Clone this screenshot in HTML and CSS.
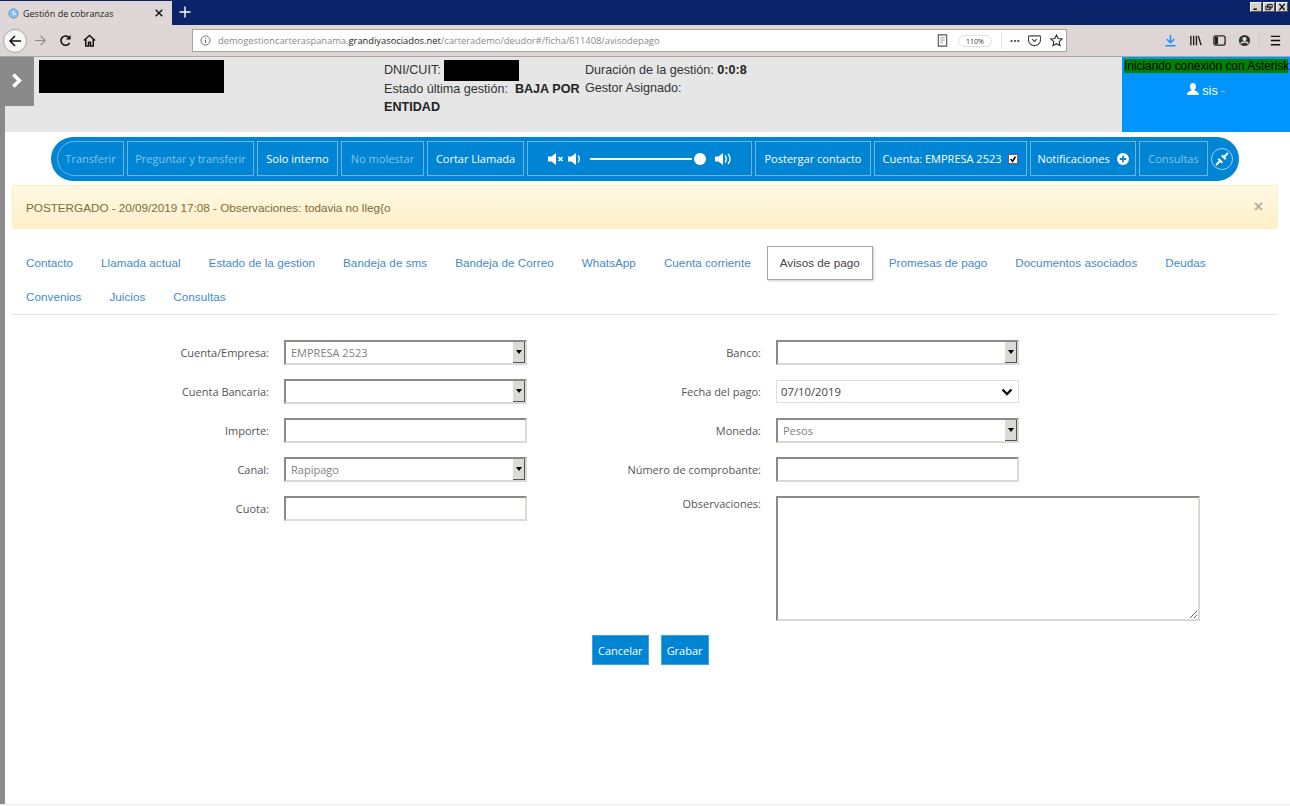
FILE: index.html
```html
<!DOCTYPE html>
<html lang="es">
<head>
    <meta charset="UTF-8">
    <title>Gestión de cobranzas</title>
    <link rel="stylesheet" href="styles.css">
</head>
<body>
    <!-- barra del navegador -->
    <div class="tab-strip">
        <div class="browser-tab">
            <svg class="favicon" viewBox="0 0 12 12"><circle cx="6" cy="6" r="5" fill="#8fc1ea" stroke="#4d8fd0"/><path d="M6 3v3.4h2.4" fill="none" stroke="#fff" stroke-width="1.2"/></svg>
            <span class="browser-tab-title">Gestión de cobranzas</span>
            <svg class="tab-close" viewBox="0 0 8 8"><path d="M.7.7l6.6 6.6M7.3.7L.7 7.3" stroke="#111" stroke-width="1.4"/></svg>
        </div>
        <svg class="new-tab" viewBox="0 0 12 12"><path d="M6 .5v11M.5 6h11" stroke="#fff" stroke-width="1.4"/></svg>
        <div class="window-buttons">
            <span class="window-button"><svg viewBox="0 0 10 9"><path d="M2 7h4" stroke="#000" stroke-width="1.6"/></svg></span>
            <span class="window-button"><svg viewBox="0 0 10 9"><path d="M3.5 1.5h5v4h-5zM1.5 3.5h5v4h-5z" fill="#ddd" stroke="#000"/></svg></span>
            <span class="window-button"><svg viewBox="0 0 10 9"><path d="M2 1l6 7M8 1L2 8" stroke="#000" stroke-width="1.5"/></svg></span>
        </div>
    </div>
    <div class="nav-bar">
        <span class="back-button"><svg viewBox="0 0 14 14"><path d="M13 7H2M7 2L2 7l5 5" fill="none" stroke="#111" stroke-width="1.5"/></svg></span>
        <svg class="nav-icon forward" viewBox="0 0 14 14"><path d="M1 7h11M7 2l5 5-5 5" fill="none" stroke="#8d8a88" stroke-width="1.2"/></svg>
        <svg class="nav-icon reload" viewBox="0 0 14 14"><path d="M11.5 9.5A5 5 0 1 1 11 4" fill="none" stroke="#111" stroke-width="1.7"/><path d="M12.5 1v5h-5z" fill="#111"/></svg>
        <svg class="nav-icon home" viewBox="0 0 14 14"><path d="M1 7l6-5.5L13 7M3 6v7h3V9h2v4h3V6" fill="none" stroke="#111" stroke-width="1.6"/></svg>
        <div class="url-bar">
            <svg class="url-info" viewBox="0 0 12 12"><circle cx="6" cy="6" r="5" fill="none" stroke="#666"/><path d="M6 5.2v3.6M6 3v1.2" stroke="#666" stroke-width="1.1"/></svg>
            <span class="url-text">demogestioncarteraspanama.<b>grandiyasociados.net</b>/carterademo/deudor#/ficha/611408/avisodepago</span>
            <svg class="url-icon reader" viewBox="0 0 12 14"><path d="M1.5 1h9v12h-9z" fill="none" stroke="#555" stroke-width="1.2"/><path d="M3.5 4h5M3.5 6.5h5M3.5 9h3" stroke="#999"/></svg>
            <span class="zoom-badge">110%</span>
            <span class="url-divider"></span>
            <span class="url-dots">•••</span>
            <svg class="url-icon" viewBox="0 0 14 14"><path d="M1.5 2h11a1 1 0 0 1 1 1v3a6.500 6.500 0 0 1-13 0V3a1 1 0 0 1 1-1z" fill="none" stroke="#444" stroke-width="1.2"/><path d="M4.500 5.500L7 8l2.500-2.500" fill="none" stroke="#444" stroke-width="1.3"/></svg>
            <svg class="url-icon star" viewBox="0 0 14 14"><path d="M7 1l1.800 3.900 4.200.5-3.100 2.900.8 4.200L7 10.400 3.300 12.500l.8-4.200L1 5.400l4.200-.5z" fill="none" stroke="#333" stroke-width="1.2"/></svg>
        </div>
        <div class="nav-right">
            <svg class="nav-icon" viewBox="0 0 14 14"><path d="M7 1v8M3 5.500L7 9.500l4-4M1.500 12.700h11" fill="none" stroke="#1f8fff" stroke-width="1.6"/></svg>
            <svg class="nav-icon" viewBox="0 0 14 14"><path d="M2 2v10M5 2v10M8 2v10" stroke="#222" stroke-width="1.5"/><path d="M10 2l3 10" stroke="#222" stroke-width="1.5"/></svg>
            <svg class="nav-icon" viewBox="0 0 14 14"><rect x="1" y="2" width="12" height="10" rx="2" fill="none" stroke="#222" stroke-width="1.4"/><path d="M2 3h3.500v8H2z" fill="#222"/></svg>
            <svg class="nav-icon" viewBox="0 0 14 14"><circle cx="7" cy="7" r="6" fill="#333"/><circle cx="7" cy="5.500" r="2.300" fill="#ddd"/><path d="M3 10.500c1-2.500 7-2.500 8 0" fill="none" stroke="#ddd" stroke-width="1.500"/></svg>
            <span class="nav-divider"></span>
            <svg class="nav-icon" viewBox="0 0 14 14"><path d="M2 2.500h10M2 7h10M2 11.500h10" stroke="#111" stroke-width="1.5"/></svg>
        </div>
    </div>

    <div class="app">
        <div class="side-strip">
            <span class="side-toggle"><svg viewBox="0 0 10 12"><path d="M2 1l5 5-5 5" fill="none" stroke="#fff" stroke-width="3"/></svg></span>
        </div>
        <div class="content">
            <div class="page-header">
                <div class="logo-box"></div>
                <div class="info-col info-first">
                    <div>DNI/CUIT: <span class="redacted"></span></div>
                    <div>Estado última gestión: &nbsp;<b>BAJA POR</b></div>
                    <div><b>ENTIDAD</b></div>
                </div>
                <div class="info-col">
                    <div>Duración de la gestión: <b>0:0:8</b></div>
                    <div>Gestor Asignado:</div>
                </div>
                <div class="user-box">
                    <div class="asterisk-status">Iniciando conexión con Asterisk</div>
                    <div class="user-name">
                        <svg viewBox="0 0 12 12"><path d="M6 0c2 0 3 1.500 3 3.300S8 7 7.500 7.500c1.500.6 4.500 1.300 4.500 4.500H0c0-3.200 3-3.900 4.500-4.500C4 7 3 5.100 3 3.300S4 0 6 0z"/></svg>
                        sis <span class="user-caret"></span>
                    </div>
                </div>
            </div>

            <div class="call-bar">
                <span class="call-btn first off">Transferir</span>
                <span class="call-btn off">Preguntar y transferir</span>
                <span class="call-btn">Solo interno</span>
                <span class="call-btn off">No molestar</span>
                <span class="call-btn">Cortar Llamada</span>
                <div class="call-btn volume">
                    <svg class="vol-mute" viewBox="0 0 17 12"><path d="M0 3.500h3.500L8 0v12L3.500 8.500H0z"/><path d="M10.500 4l4 4M14.500 4l-4 4" stroke="#fff" stroke-width="1.500"/></svg>
                    <svg class="vol-low" viewBox="0 0 14 12"><path d="M0 3.500h3.500L8 0v12L3.500 8.500H0z"/><path d="M10 2.500c1.500 2 1.500 5 0 7" fill="none" stroke="#fff" stroke-width="1.300"/></svg>
                    <span class="vol-track"></span>
                    <span class="vol-thumb"></span>
                    <svg class="vol-high" viewBox="0 0 17 12"><path d="M0 3.500h3.500L8 0v12L3.500 8.500H0z"/><path d="M10 2.500c1.500 2 1.500 5 0 7M13 1c2.500 3 2.500 7 0 10" fill="none" stroke="#fff" stroke-width="1.300"/></svg>
                </div>
                <span class="call-btn">Postergar contacto</span>
                <span class="call-btn">Cuenta: EMPRESA 2523 <span class="check-box"><svg viewBox="0 0 10 10"><path d="M2 5l2.500 3L8 2" fill="none" stroke="#000" stroke-width="2"/></svg></span></span>
                <span class="call-btn">Notificaciones <svg class="plus-circle" viewBox="0 0 12 12"><circle cx="6" cy="6" r="6" fill="#fff"/><path d="M6 2.800v6.400M2.800 6h6.400" stroke="#0085d4" stroke-width="1.800"/></svg></span>
                <span class="call-btn off">Consultas</span>
                <span class="expand-btn"><svg viewBox="0 0 14 14"><path d="M9 5l4-4M5 9l-4 4" stroke="#fff" stroke-width="1.800"/><path d="M7.500 2.500l4 4-1.500 1.500-4-4zM2.500 7.500l4 4L8 10 4 6z" fill="#fff"/></svg></span>
            </div>

            <div class="alert-box">
                <span>POSTERGADO - 20/09/2019 17:08 - Observaciones: todavia no lleg{o</span>
                <span class="alert-close">×</span>
            </div>

            <ul class="tabs">
                <li>Contacto</li>
                <li>Llamada actual</li>
                <li>Estado de la gestion</li>
                <li>Bandeja de sms</li>
                <li>Bandeja de Correo</li>
                <li>WhatsApp</li>
                <li>Cuenta corriente</li>
                <li class="active">Avisos de pago</li>
                <li>Promesas de pago</li>
                <li>Documentos asociados</li>
                <li>Deudas</li>
                <li>Convenios</li>
                <li>Juicios</li>
                <li>Consultas</li>
            </ul>

            <form class="pay-form">
                <div class="form-col col-left">
                    <label>Cuenta/Empresa:</label>
                    <div class="select-box"><select class="field"><option>EMPRESA 2523</option></select><span class="select-arrow"></span></div>
                    <label>Cuenta Bancaria:</label>
                    <div class="select-box"><select class="field"><option></option></select><span class="select-arrow"></span></div>
                    <label>Importe:</label>
                    <input class="field" type="text">
                    <label>Canal:</label>
                    <div class="select-box"><select class="field"><option>Rapipago</option></select><span class="select-arrow"></span></div>
                    <label>Cuota:</label>
                    <input class="field" type="text">
                </div>
                <div class="form-col col-right">
                    <label>Banco:</label>
                    <div class="select-box"><select class="field"><option></option></select><span class="select-arrow"></span></div>
                    <label>Fecha del pago:</label>
                    <div class="date-field">07/10/2019<svg viewBox="0 0 12 8"><path d="M1.500 1.500L6 6l4.500-4.500" fill="none" stroke="#111" stroke-width="2.400"/></svg></div>
                    <label>Moneda:</label>
                    <div class="select-box"><select class="field"><option>Pesos</option></select><span class="select-arrow"></span></div>
                    <label>Número de comprobante:</label>
                    <input class="field" type="text">
                    <label class="label-top">Observaciones:</label>
                    <textarea class="field notes"></textarea>
                </div>
                <div class="form-actions">
                    <button type="button" class="btn-blue">Cancelar</button>
                    <button type="button" class="btn-blue">Grabar</button>
                </div>
            </form>
        </div>
    </div>
</body>
</html>
```

FILE: styles.css
```css
* {
    box-sizing: border-box;
}
html, body {
    margin: 0;
    height: 806px;
    overflow: hidden;
    background: #fff;
}
body {
    font-family: "Liberation Sans", Arial, sans-serif;
    font-size: 11.7px;
    color: #333;
}

/* navegador */
.tab-strip {
    height: 25px;
    background: #0a2369;
    display: flex;
    align-items: stretch;
}
.browser-tab {
    width: 172px;
    margin-top: 1px;
    background: #dfd7d5;
    display: flex;
    align-items: center;
    padding: 0 9px 0 8px;
    font-family: "Open Sans", sans-serif;
    font-size: 9px;
    color: #222;
}
.favicon {
    width: 11px;
    height: 11px;
    margin-right: 4px;
}
.browser-tab-title {
    flex: 1;
}
.tab-close {
    width: 8px;
    height: 8px;
}
.new-tab {
    width: 12px;
    height: 12px;
    margin: 6px 0 0 7px;
}
.window-buttons {
    margin-left: auto;
    display: flex;
    gap: 1px;
    padding: 2px 2px 0 0;
}
.window-button {
    width: 12px;
    height: 10px;
    background: #d6d3ce;
    border: 1px solid #888;
    border-color: #f4f4f4 #555 #555 #f4f4f4;
    display: flex;
}
.window-button svg {
    width: 100%;
    height: 100%;
}
.nav-bar {
    height: 32px;
    background: #ddd6d4;
    border-bottom: 1px solid #a9a59f;
    display: flex;
    align-items: center;
    padding-left: 3px;
}
.back-button {
    width: 24px;
    height: 24px;
    border-radius: 50%;
    background: #f7f5f4;
    border: 1px solid #aaa5a2;
    display: flex;
    align-items: center;
    justify-content: center;
}
.back-button svg {
    width: 14px;
    height: 14px;
}
.nav-icon {
    width: 13px;
    height: 13px;
}
.forward {
    margin-left: 7px;
}
.reload {
    margin-left: 12px;
}
.home {
    margin-left: 11px;
}
.url-bar {
    width: 875px;
    height: 23px;
    margin-left: 96px;
    background: #fff;
    border: 1px solid #a9a59f;
    display: flex;
    align-items: center;
    padding: 0 3px 0 7px;
    font-family: "Open Sans", sans-serif;
    font-size: 9.33px;
    color: #8a8a8a;
}
.url-info {
    width: 11px;
    height: 11px;
    margin-right: 7px;
}
.url-text {
    flex: 1;
}
.url-text b {
    font-weight: 400;
    color: #222;
}
.url-icon {
    width: 13px;
    height: 13px;
}
.url-icon.reader {
    margin-right: 9px;
}
.url-icon.star {
    margin-left: 9px;
}
.zoom-badge {
    width: 34px;
    height: 12px;
    line-height: 11px;
    border-radius: 6px;
    border: 1px solid #e0e0e0;
    text-align: center;
    font-size: 7px;
    color: #333;
    margin-right: 9px;
}
.url-divider {
    width: 1px;
    height: 17px;
    background: #e4e4e4;
    margin-right: 8px;
}
.url-dots {
    font-size: 9px;
    color: #444;
    letter-spacing: 0;
    margin-right: 8px;
}
.nav-right {
    margin-left: 97px;
    display: flex;
    align-items: center;
    gap: 11.5px;
}
.nav-divider {
    width: 1px;
    height: 20px;
    margin: 0 -3px;
    background: #d3ccca;
}

/* pagina */
.app {
    display: flex;
    height: 748px;
    border-bottom: 1px solid #e6e6e6;
}
.side-strip {
    width: 5px;
    background: #8a8a8a;
    position: relative;
    flex-shrink: 0;
}
.side-toggle {
    position: absolute;
    top: 0;
    left: 0;
    width: 34px;
    height: 49px;
    background: #8a8a8a;
    display: flex;
    align-items: flex-start;
    justify-content: center;
    padding-top: 16px;
}
.side-toggle svg {
    width: 12px;
    height: 15px;
}
.content {
    flex: 1;
    min-width: 0;
}
.page-header {
    height: 75px;
    background: #e6e6e6;
    display: flex;
    font-size: 12.6px;
}
.logo-box {
    width: 185px;
    height: 33px;
    margin: 3px 0 0 34px;
    background: #000;
}
.info-col {
    padding-top: 4px;
    line-height: 18px;
    color: #333;
}
.info-col b {
    color: #222;
}
.info-first {
    width: 201px;
    margin-left: 160px;
}
.redacted {
    display: inline-block;
    width: 75px;
    height: 21px;
    background: #000;
    margin: -2px 0 -1px 0;
    vertical-align: middle;
}
.user-box {
    width: 168px;
    margin-left: auto;
    background: #0094ff;
    color: #fff;
    text-align: center;
    padding-top: 2px;
}
.asterisk-status {
    margin-left: 2px;
    background: #008000;
    color: #000;
    font-size: 11.85px;
    line-height: 14px;
    white-space: nowrap;
    width: 164px;
}
.user-name {
    margin-top: 10px;
    font-size: 12.6px;
}
.user-name svg {
    width: 12px;
    height: 12px;
    fill: #fff;
}
.user-caret {
    display: inline-block;
    width: 4px;
    height: 1px;
    background: #8cc4ee;
    vertical-align: middle;
}

/* barra de llamada */
.call-bar {
    width: 1188px;
    height: 44px;
    margin: 5px 0 0 46px;
    padding: 4px 6px 5px;
    background: #0085d4;
    border-radius: 22px;
    display: grid;
    grid-template-columns: 67px 127px 81px 83px 97px 225px 116px 153px 106px 69px 22px;
    column-gap: 3px;
    font-family: "Open Sans", sans-serif;
    font-size: 11px;
    color: #fff;
}
.call-btn {
    display: flex;
    align-items: center;
    justify-content: center;
    gap: 4px;
    border: 1px solid #6ab5e3;
    white-space: pre;
}
.call-btn.off {
    color: #85c4ea;
}
.call-btn.first {
    border-radius: 18px 0 0 18px;
}
.volume {
    position: relative;
    justify-content: flex-start;
    padding-left: 20px;
    gap: 0;
}
.volume svg {
    fill: #fff;
    height: 12px;
}
.vol-mute {
    width: 17px;
}
.vol-low {
    width: 14px;
    margin-left: 3px;
}
.vol-track {
    width: 102px;
    height: 2px;
    background: #fff;
    margin-left: 8px;
}
.vol-thumb {
    width: 12px;
    height: 12px;
    border-radius: 50%;
    background: #fff;
    margin: 0 0 0 2px;
}
.vol-high {
    width: 17px;
    margin-left: 9px;
}
.check-box {
    width: 10px;
    height: 10px;
    background: #fff;
    border: 1px solid #7a5a5a;
    display: inline-flex;
}
.plus-circle {
    width: 12px;
    height: 12px;
}
.expand-btn {
    width: 22px;
    height: 22px;
    align-self: center;
    border: 1px solid #9fd0ee;
    border-radius: 50%;
    display: flex;
    align-items: center;
    justify-content: center;
}
.expand-btn svg {
    width: 14px;
    height: 14px;
}

/* aviso */
.alert-box {
    width: 1266px;
    height: 44px;
    margin: 4px 0 0 7px;
    padding: 0 14px 0 13px;
    display: flex;
    align-items: center;
    justify-content: space-between;
    background: linear-gradient(#fff9e3, #fdefc9);
    border: 1px solid #f8eec0;
    border-radius: 3px;
    color: #7f6a3a;
}
.alert-close {
    color: #b5b0a0;
    font-size: 16px;
    font-weight: bold;
}

/* pestañas */
.tabs {
    list-style: none;
    margin: 17px 0 0 7px;
    padding: 0;
    width: 1266px;
    display: flex;
    flex-wrap: wrap;
    border-bottom: 1px solid #e4e4e4;
    letter-spacing: 0.025px;
}
.tabs li {
    height: 34px;
    line-height: 34px;
    padding: 0 14px;
    color: #428bca;
}
.tabs li.active {
    padding: 0 12px;
    margin: 0 2px;
    border: 1px solid #a8a8a8;
    box-shadow: 1px 1px 2px #ccc;
    line-height: 32px;
    color: #444;
}

/* formulario */
.pay-form {
    display: grid;
    grid-template-columns: 432px 1fr;
    padding: 25px 0 0 144px;
    font-family: "Open Sans", sans-serif;
    font-size: 11px;
}
.form-col {
    display: grid;
    row-gap: 14px;
    column-gap: 15px;
    align-content: start;
    align-items: center;
}
.col-left {
    grid-template-columns: 120px 243px;
}
.col-right {
    grid-template-columns: 180px 424px;
}
.form-col label {
    text-align: right;
    color: #555;
}
.form-col .label-top {
    align-self: start;
}
.field {
    width: 243px;
    height: 25px;
    background: #fff;
    border: 2px solid;
    border-color: #8c8a86 #dbd9d5 #dbd9d5 #8c8a86;
    border-radius: 0;
    padding: 0 5px;
    font: inherit;
    color: #808080;
    appearance: none;
    outline: none;
}
.select-box {
    position: relative;
    width: 243px;
    height: 25px;
}
.select-arrow {
    position: absolute;
    top: 2px;
    right: 2px;
    width: 12px;
    height: 21px;
    background: #dcdad5;
    border-right: 1px solid #555;
    border-bottom: 1px solid #555;
}
.select-arrow::after {
    content: "";
    position: absolute;
    top: 8px;
    left: 3px;
    border: 3px solid transparent;
    border-top: 4px solid #000;
}
.date-field {
    width: 243px;
    height: 23px;
    margin: 1px 0;
    border: 1px solid #dedede;
    padding: 0 5px 0 4px;
    display: flex;
    align-items: center;
    justify-content: space-between;
    color: #444;
    font-size: 11.3px;
}
.date-field svg {
    width: 12px;
    height: 8px;
}
.notes {
    width: 424px;
    height: 125px;
    resize: both;
}
.form-actions {
    grid-column: 1 / -1;
    margin: 14px 0 0 443px;
    display: flex;
    gap: 12px;
}
.btn-blue {
    height: 30px;
    padding: 0 5px;
    border: 1px solid #3ba6e0;
    background: #0085d4;
    color: #fff;
    font: inherit;
}
```
